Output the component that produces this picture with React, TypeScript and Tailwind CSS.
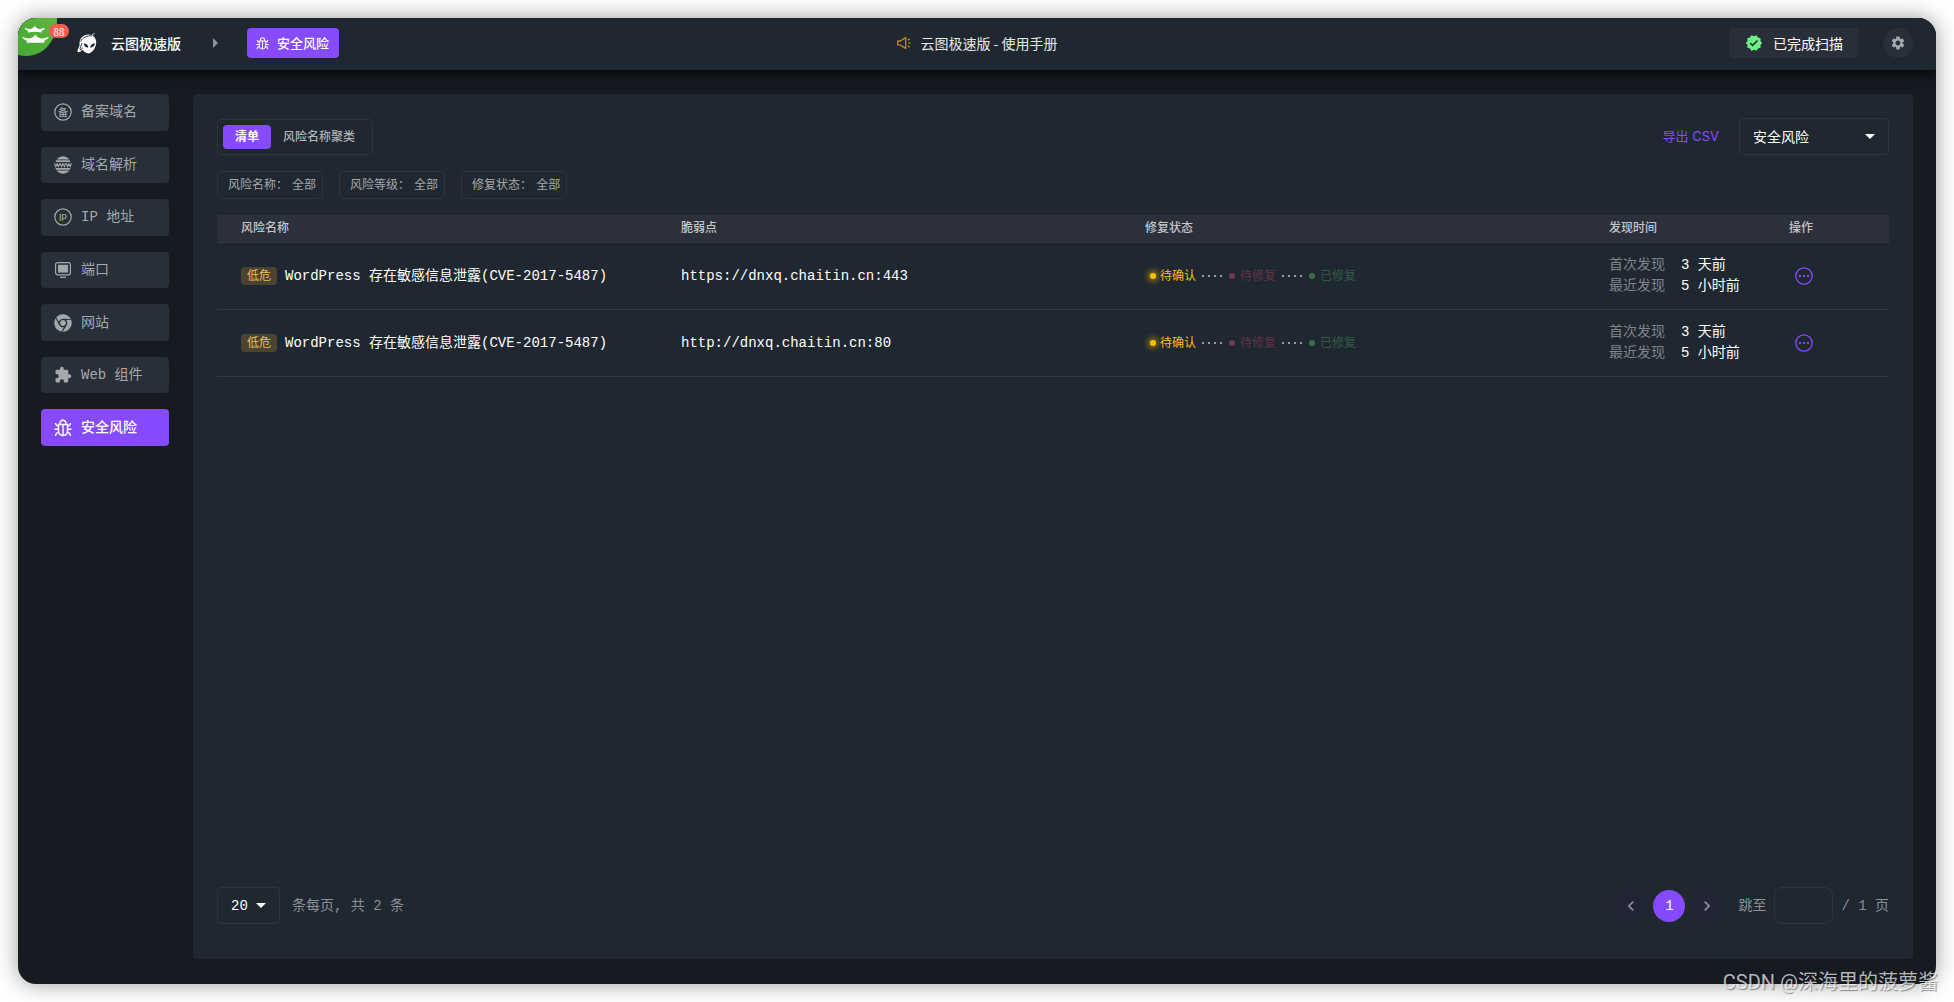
import { useState, type ReactNode } from 'react'
import { AiOutlineSound } from 'react-icons/ai'
import { FaChrome } from 'react-icons/fa'
import { MdArrowDropDown, MdArrowRight, MdChevronLeft, MdChevronRight, MdExtension, MdSettings, MdVerified } from 'react-icons/md'

const MONO = "font-['Liberation_Mono','Noto_Sans_CJK_SC',monospace]"
const SANS = "font-['Inter','Noto_Sans_CJK_SC',sans-serif]"
const CJK = "font-['Noto_Sans_CJK_SC',sans-serif]"

const risks = [
  { name: 'WordPress 存在敏感信息泄露(CVE-2017-5487)', target: 'https://dnxq.chaitin.cn:443', first: '3 天前', last: '5 小时前' },
  { name: 'WordPress 存在敏感信息泄露(CVE-2017-5487)', target: 'http://dnxq.chaitin.cn:80', first: '3 天前', last: '5 小时前' },
]

const filters = ['风险名称', '风险等级', '修复状态']

function PagodaMark() {
  return (
    <svg viewBox="0 0 39 38" className="block h-[38px] w-[39px]" aria-hidden="true">
      <defs>
        <linearGradient id="mark" x1="1" y1="0" x2="0" y2="1">
          <stop offset="0" stopColor="#5fb53f" />
          <stop offset="1" stopColor="#43a832" />
        </linearGradient>
      </defs>
      <path d="M0 0H39C39.5 20 28 38 8 38Q4 38 0 37Z" fill="url(#mark)" />
      <path d="M6.500 9.500Q13 12.500 15 9.800L16.800 8L18.600 9.800Q20.600 12.500 27 9.500Q26.300 12 23.500 12.800L23.800 14.500Q17 13 9.800 14.500L10 12.800Q7.300 12 6.500 9.500Z" fill="#fff" />
      <path d="M4 18.800Q12 22 15 19L17.300 16.800L19.600 19Q22.600 22 31 18.800Q29.800 21.700 26.500 22.500L26.200 24.800H8.800L8.500 22.500Q5.200 21.700 4 18.800Z" fill="#fff" />
    </svg>
  )
}

function AlienLogo() {
  return (
    <svg viewBox="0 0 20 21" className="h-[21px] w-5" aria-hidden="true">
      <path d="M11.500 1.500C16 1.500 19.300 5 19.200 9.500C19.100 14.500 15.500 20 11.500 20.500C9 20.300 7 18.800 5.600 16.800Q3.500 19.300 .8 19.300Q0 18 1.200 15.500L2.600 12.300C1.800 6 6 1.500 11.500 1.500Z" fill="#fff" />
      <path d="M3.600 8.500C5.800 4.500 10 2.300 15 2.800" stroke="#20272f" strokeWidth=".9" fill="none" />
      <path d="M15 2.200L17.500 .3" stroke="#fff" strokeWidth="1" />
      <path d="M5.200 10L3 15.200L3.600 17.200L5.800 14.500" fill="none" stroke="#20272f" strokeWidth=".9" />
      <path d="M6.800 10.500C9 10.300 11 11.800 11.300 14.500C8.800 14.800 7 13.200 6.800 10.500ZM18 10.300C15.500 10.300 13.500 12 13.200 14.700C15.800 14.500 17.800 13 18 10.300Z" fill="#20272f" />
    </svg>
  )
}

function BugIcon({ className }: { className: string }) {
  return (
    <svg viewBox="0 0 18 18" className={className} fill="none" stroke="currentColor" strokeWidth="1.400" aria-hidden="true">
      <path d="M4.500 5.500H13.500V11.500Q13.500 16.500 9 16.500Q4.500 16.500 4.500 11.500Z" />
      <path d="M6 5.500V4.200Q6.200 1.200 9 1.200Q11.800 1.200 12 4.200V5.500" />
      <path d="M9 6V16.500M.500 10.300H4.500M13.500 10.300H17.500M4.500 7Q1.800 7 1.500 4M13.500 7Q16.200 7 16.500 4M5 13.300Q2 13.500 1.500 17M13 13.300Q16 13.500 16.500 17" />
    </svg>
  )
}

function RoundTextIcon({ label, size }: { label: string; size: number }) {
  return (
    <svg viewBox="0 0 18 18" className="size-[18px]" aria-hidden="true">
      <circle cx="9" cy="9" r="8.200" fill="none" stroke="currentColor" strokeWidth="1.200" />
      <text x="9" y="12.500" textAnchor="middle" fontSize={size} fontWeight="500" fill="currentColor" className={SANS}>
        {label}
      </text>
    </svg>
  )
}

function WwwIcon() {
  return (
    <svg viewBox="0 0 18 18" className="size-[18px]" aria-hidden="true">
      <path d="M4 2Q9-1.500 14 2L15.300 3.600H2.700ZM2.200 4.300H15.800L16.600 6H1.400ZM1.400 12H16.600L15.800 13.700H2.200ZM2.700 14.400H15.300L14 16Q9 19.500 4 16Z" fill="currentColor" />
      <path d="M.5 7.200L1.800 10.600L3.200 7.800L4.500 10.600L5.800 7.200M6.300 7.200L7.500 10.600L9 7.800L10.400 10.600L11.600 7.200M12.200 7.200L13.500 10.600L14.800 7.800L16.200 10.600L17.400 7.200" fill="none" stroke="currentColor" strokeWidth="1.100" />
    </svg>
  )
}

function PortIcon() {
  return (
    <svg viewBox="0 0 18 18" className="size-[18px]" aria-hidden="true">
      <rect x="1.600" y="1.600" width="14.800" height="12.200" rx="2" fill="none" stroke="currentColor" strokeWidth="1.200" />
      <rect x="4" y="3.800" width="10" height="7.800" fill="currentColor" />
      <path d="M6 16.300H12" stroke="currentColor" strokeWidth="1.300" />
    </svg>
  )
}

function MoreIcon() {
  return (
    <svg viewBox="0 0 18 18" className="size-[18px]" aria-hidden="true">
      <circle cx="9" cy="9" r="8.200" fill="none" stroke="currentColor" strokeWidth="1.300" />
      <path d="M4 8H6V10H4ZM8 8H10V10H8ZM12 8H14V10H12Z" fill="currentColor" />
    </svg>
  )
}

const navItems: { label: string; icon: ReactNode }[] = [
  { label: '备案域名', icon: <RoundTextIcon label="备" size={10} /> },
  { label: '域名解析', icon: <WwwIcon /> },
  { label: 'IP 地址', icon: <RoundTextIcon label="IP" size={9} /> },
  { label: '端口', icon: <PortIcon /> },
  { label: '网站', icon: <FaChrome className="size-[18px]" /> },
  { label: 'Web 组件', icon: <MdExtension className="size-[18px]" /> },
  { label: '安全风险', icon: <BugIcon className="size-[18px]" /> },
]

function Header() {
  return (
    <header className="relative z-10 grid h-[52px] shrink-0 grid-cols-[1fr_auto_1fr] items-center bg-[#1f2730] pb-[2px] shadow-[0_2px_12px_#000]">
      <div className="flex h-[50px] items-center">
        <div className="relative self-start">
          <PagodaMark />
          <span className="absolute left-[31px] top-[6px] flex h-[14px] w-5 items-center justify-center rounded-full bg-[#ff5a50] text-[10px] text-white">88</span>
        </div>
        <div className="ml-5 flex items-center">
          <AlienLogo />
          <h1 className="ml-[14px] text-sm font-medium text-white">云图极速版</h1>
          <MdArrowRight className="ml-[22px] size-6 text-[#8f9397]" />
          <button className="ml-5 flex h-[30px] items-center gap-2 rounded bg-[#874bff] pl-[9px] pr-[10px] text-[13px] font-medium text-white">
            <BugIcon className="size-[13px]" />
            安全风险
          </button>
        </div>
      </div>
      <a href="#manual" className="flex items-center gap-2 text-sm text-[#e8e9ea]">
        <AiOutlineSound className="size-4 text-[#d99a14]" />
        云图极速版 - 使用手册
      </a>
      <div className="flex items-center justify-end gap-6 pr-[23px]">
        <button className="flex h-[30px] items-center gap-[10px] rounded bg-[#282f38] px-4 text-sm text-white">
          <MdVerified className="size-[18px] text-[#6def83]" />
          已完成扫描
        </button>
        <button aria-label="设置" className="flex size-[30px] items-center justify-center rounded-full bg-[#282f38] text-[#a5a8ab]">
          <MdSettings className="size-4" />
        </button>
      </div>
    </header>
  )
}

function Sidebar() {
  const [active, setActive] = useState('安全风险')
  return (
    <nav className="flex h-[352px] w-32 shrink-0 flex-col gap-4">
      {navItems.map((item) => (
        <button
          key={item.label}
          onClick={() => setActive(item.label)}
          className={`flex flex-1 items-center gap-[9px] rounded px-[13px] text-sm ${
            active === item.label ? 'bg-[#874bff] font-medium text-white' : 'bg-[#282f38] text-[#a5a8ab]'
          }`}
        >
          {item.icon}
          {item.label}
        </button>
      ))}
    </nav>
  )
}

function Dots() {
  return (
    <span className="flex gap-1">
      <i className="size-[2px] bg-[#9a9da1]" />
      <i className="size-[2px] bg-[#9a9da1]" />
      <i className="size-[2px] bg-[#9a9da1]" />
      <i className="size-[2px] bg-[#9a9da1]" />
    </span>
  )
}

function FixStatus() {
  return (
    <div className={`flex items-center pl-[5px] text-xs ${SANS}`}>
      <i className="size-[6px] rounded-full bg-[#ffbf00] shadow-[0_0_6px_2px_#ffbf0099]" />
      <span className="ml-1 mr-[6px] text-[#ffbf00]">待确认</span>
      <Dots />
      <i className="ml-[7px] size-[6px] rounded-full bg-[#6f3a4b]" />
      <span className="ml-[5px] mr-[6px] text-[#633545]">待修复</span>
      <Dots />
      <i className="ml-[7px] size-[6px] rounded-full bg-[#3a6e4c]" />
      <span className="ml-[5px] text-[#325c43]">已修复</span>
    </div>
  )
}

function RiskTable() {
  return (
    <table className="mt-4 w-full table-fixed border-collapse text-left">
      <thead>
        <tr className={`h-[27px] border-b border-[#343b47] bg-[#2b303b] text-xs text-[#c5c7ca] ${SANS}`}>
          <th className="w-[440px] py-0 pl-6 font-medium">风险名称</th>
          <th className="py-0 pl-6 font-medium">脆弱点</th>
          <th className="py-0 pl-6 font-medium">修复状态</th>
          <th className="w-[180px] py-0 pl-6 font-medium">发现时间</th>
          <th className="w-[124px] py-0 pl-6 font-medium">操作</th>
        </tr>
      </thead>
      <tbody>
        {risks.map((risk) => (
          <tr key={risk.target} className="h-[67px] border-b border-[#343b47] text-sm text-white">
            <td className="py-0 pl-6">
              <div className="flex items-center gap-2">
                <span className={`flex h-[18px] w-9 items-center justify-center rounded-sm bg-[#4b4435] text-xs text-[#f0bd45] ${SANS}`}>低危</span>
                <span className="whitespace-nowrap">{risk.name}</span>
              </div>
            </td>
            <td className="py-0 pl-6">{risk.target}</td>
            <td className="py-0 pl-6">
              <FixStatus />
            </td>
            <td className="py-0 pl-6">
              <dl className="grid grid-cols-[56px_auto] gap-x-4 whitespace-nowrap leading-[21px]">
                <dt className="text-[#80848a]">首次发现</dt>
                <dd>{risk.first}</dd>
                <dt className="text-[#80848a]">最近发现</dt>
                <dd>{risk.last}</dd>
              </dl>
            </td>
            <td className="py-0 pl-[30px]">
              <button aria-label="更多操作" className="block text-[#874bff]">
                <MoreIcon />
              </button>
            </td>
          </tr>
        ))}
      </tbody>
    </table>
  )
}

function Pagination() {
  return (
    <footer className="mt-auto flex items-center justify-between text-sm text-[#8c9095]">
      <div className="flex items-center gap-3">
        <div className="relative">
          <select aria-label="每页条数" className="block h-[37px] w-[63px] appearance-none rounded border border-[#2d343e] bg-transparent pl-[13px] text-white">
            <option>20</option>
          </select>
          <MdArrowDropDown className="pointer-events-none absolute right-[7px] top-[6px] size-6 text-white" />
        </div>
        <span>条每页, 共 2 条</span>
      </div>
      <div className="flex items-center">
        <div className="flex gap-[6px]">
          <button aria-label="上一页" className="flex size-8 items-center justify-center rounded-full bg-[#222536]">
            <MdChevronLeft className="size-5" />
          </button>
          <button className="flex size-8 items-center justify-center rounded-full bg-[#874bff] text-white">1</button>
          <button aria-label="下一页" className="flex size-8 items-center justify-center rounded-full bg-[#222536]">
            <MdChevronRight className="size-5" />
          </button>
        </div>
        <label htmlFor="jump" className="ml-[15px] mr-2">跳至</label>
        <input id="jump" className="mr-2 h-[37px] w-[59px] rounded-lg border border-[#2d343e] bg-transparent px-2 text-white" />
        <span>/ 1 页</span>
      </div>
    </footer>
  )
}

export default function App() {
  return (
    <div lang="zh-CN" className={`relative h-screen bg-white p-[18px] ${MONO}`}>
      <div className="flex h-full flex-col overflow-hidden rounded-[18px] bg-[#161a21] shadow-[0_0_22px_#00000066]">
        <div className={CJK}>
          <Header />
        </div>
        <div className="flex min-h-0 flex-1 gap-6 px-[23px] pb-[25px] pt-6">
          <Sidebar />
          <main className="flex min-w-0 flex-1 flex-col rounded bg-[#1f2730] px-6 pb-[35px] pt-6">
            <div className={`flex items-end justify-between ${SANS}`}>
              <div className="flex h-9 items-center rounded border border-[#2d343e] px-[5px] text-xs">
                <button className="h-6 rounded bg-[#874bff] px-3 font-bold text-white">清单</button>
                <button className="h-6 px-3 font-medium text-[#b1b4b7]">风险名称聚类</button>
              </div>
              <div className="flex items-center gap-5">
                <button className="text-[13px] text-[#874bff]">导出 CSV</button>
                <div className="relative">
                  <select aria-label="数据类型" className="block h-[37px] w-[150px] appearance-none rounded border border-[#2d343e] bg-transparent pl-[13px] text-sm text-white">
                    <option>安全风险</option>
                  </select>
                  <MdArrowDropDown className="pointer-events-none absolute right-[7px] top-[6px] size-6 text-white" />
                </div>
              </div>
            </div>
            <div className={`mt-4 flex gap-4 ${SANS}`}>
              {filters.map((name) => (
                <button key={name} className="flex h-7 items-center gap-1 rounded border border-[#2d343e] pl-[10px] pr-[6px] text-xs text-[#a5a8ab]">
                  <span>{name}：</span>
                  <span>全部</span>
                </button>
              ))}
            </div>
            <RiskTable />
            <Pagination />
          </main>
        </div>
      </div>
      <p className="absolute bottom-[6px] right-4 z-20 font-['Roboto','Noto_Sans_CJK_SC',sans-serif] text-xl text-white/70 [text-shadow:1px_1px_1px_#00000066]">
        CSDN @深海里的菠萝酱
      </p>
    </div>
  )
}
